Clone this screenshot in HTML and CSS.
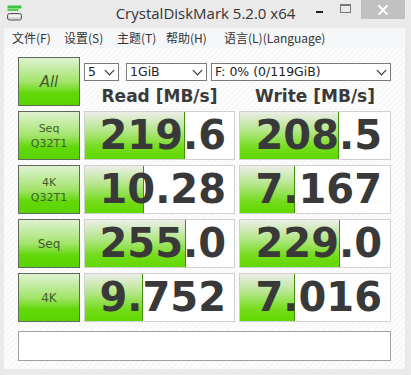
FILE: index.html
```html
<!DOCTYPE html>
<html lang="zh-CN">
<head>
  <meta charset="UTF-8" />
  <title>CrystalDiskMark 5.2.0 x64</title>
  <link rel="stylesheet" href="styles.css">
</head>
<body>

  <div class="window">
    <div class="title-bar">
      <svg class="app-icon" width="16" height="16" viewBox="0 0 16 16">
        <rect x="0.5" y="0.5" width="14" height="3" rx="0.5" fill="#3cc43c" />
        <rect x="0.5" y="4" width="11" height="2" fill="#52d052" />
        <rect x="0.5" y="8.5" width="14" height="6.5" rx="2" fill="#d8d8d8" stroke="#555" stroke-width="1" />
        <rect x="2" y="10" width="11" height="2" fill="#f4f4f4" />
      </svg>
      <div class="title">CrystalDiskMark 5.2.0 x64</div>
      <div class="win-btns">
        <div class="win-btn min"><span></span></div>
        <div class="win-btn max"><span></span></div>
        <div class="win-btn close">
          <svg width="12" height="12" viewBox="0 0 12 12">
            <path d="M1.5 1.5 L10.5 10.5 M10.5 1.5 L1.5 10.5" stroke="#fff" stroke-width="1.8" />
          </svg>
        </div>
      </div>
    </div>

    <div class="menu-bar">
      <span class="menu-item m1">文件(F)</span>
      <span class="menu-item m2">设置(S)</span>
      <span class="menu-item m3">主题(T)</span>
      <span class="menu-item m4">帮助(H)</span>
      <span class="menu-item m5">语言(L)(Language)</span>
    </div>

    <div class="client">
      <div class="grid">
        <div class="test-btn all">All</div>
        <div class="top-panel">
          <div class="selects">
            <div class="select s-count">5<i class="chev"></i></div>
            <div class="select s-size">1GiB<i class="chev"></i></div>
            <div class="select s-drive">F: 0% (0/119GiB)<i class="chev"></i></div>
          </div>
          <div class="headers">
            <div class="head">Read [MB/s]</div>
            <div class="head">Write [MB/s]</div>
          </div>
        </div>

        <div class="test-btn small">Seq<br>Q32T1</div>
        <div class="val" style="--w:100px">219.6</div>
        <div class="val" style="--w:99px">208.5</div>

        <div class="test-btn small">4K<br>Q32T1</div>
        <div class="val" style="--w:59px">10.28</div>
        <div class="val" style="--w:55px">7.167</div>

        <div class="test-btn">Seq</div>
        <div class="val" style="--w:101px">255.0</div>
        <div class="val" style="--w:100px">229.0</div>

        <div class="test-btn">4K</div>
        <div class="val" style="--w:58px">9.752</div>
        <div class="val" style="--w:55px">7.016</div>

        <div class="comment"></div>
      </div>
    </div>
  </div>

</body>
</html>
```

FILE: styles.css
```css
body {
  margin: 0;
  font-family: 'DejaVu Sans', sans-serif;
  background: #e9e9e9;
}

.window {
  width: 411px;
  height: 375px;
  background: #eaeaea;
  display: flex;
  flex-direction: column;
  overflow: hidden;
}

/* title bar */
.title-bar {
  flex-shrink: 0;
  height: 28px;
  position: relative;
  display: flex;
  align-items: flex-start;
}

.app-icon {
  margin: 5px 0 0 7px;
}

.title {
  position: absolute;
  left: 0;
  right: 0;
  top: 3px;
  text-align: center;
  font-family: 'Open Sans', sans-serif;
  font-size: 15px;
  color: #333;
}

.win-btns {
  margin-left: auto;
  margin-right: 6px;
  display: flex;
  position: relative;
}

.win-btn {
  height: 19px;
  display: flex;
  align-items: center;
  justify-content: center;
}

.win-btn.min {
  width: 26px;
}

.win-btn.min span {
  width: 7px;
  height: 2px;
  background: #222;
  margin-top: 5px;
}

.win-btn.max {
  width: 27px;
  margin-right: 2px;
}

.win-btn.max span {
  width: 9px;
  height: 6px;
  border: 1px solid #777;
  border-top-width: 2px;
  margin-top: -2px;
}

.win-btn.close {
  width: 44px;
  background: #c0c0c0;
}

/* menu */
.menu-bar {
  flex-shrink: 0;
  height: 20px;
  margin: 0 6px 0 4px;
  background: #f5f6f7;
  position: relative;
  font-family: 'Noto Sans CJK SC', sans-serif;
  font-size: 12px;
  color: #333;
  line-height: 20px;
}

.menu-item {
  position: absolute;
  top: 0;
}

.m1 { left: 8px; }
.m2 { left: 60px; }
.m3 { left: 113px; }
.m4 { left: 162px; }
.m5 { left: 220px; }

/* client area */
.client {
  flex: 1;
  min-height: 0;
  margin: 0 6px 6px 4px;
  padding: 9px 0 0 14px;
  background: repeating-linear-gradient(135deg, #f7f7f7 0 2px, #fdfdfd 2px 4px);
}

.grid {
  display: grid;
  grid-template-columns: 62px 151px 152px;
  grid-template-rows: repeat(5, 49px) 30px;
  column-gap: 4px;
  row-gap: 5px;
}

.test-btn {
  box-sizing: border-box;
  border: 1px solid #5f6a5c;
  background: linear-gradient(#dff2d2, #a4e46c 50%, #62d80a 75%, #5ad400);
  display: flex;
  align-items: center;
  justify-content: center;
  text-align: center;
  color: #3f5f2c;
  font-family: 'DejaVu Sans', sans-serif;
  font-size: 12px;
  line-height: 16px;
}

.test-btn.all {
  font-size: 15px;
  font-style: italic;
}

.test-btn.small {
  font-size: 11px;
  line-height: 15px;
}

.top-panel {
  grid-column: 2 / 4;
  display: flex;
  flex-direction: column;
}

.selects {
  display: flex;
  margin-top: 6px;
  height: 18px;
}

.select {
  box-sizing: border-box;
  height: 18px;
  background: #fff;
  border: 1px solid #7a7a7a;
  font-size: 12.5px;
  line-height: 16px;
  padding-left: 3px;
  color: #222;
  display: flex;
  align-items: center;
}

.s-count { width: 35px; }
.s-size { width: 81px; margin-left: 7px; }
.s-drive { width: 180px; margin-left: 4px; }

.chev {
  margin-left: auto;
  margin-right: 5px;
  width: 6px;
  height: 6px;
  border-right: 1.6px solid #222;
  border-bottom: 1.6px solid #222;
  transform: rotate(45deg);
  margin-top: -4px;
}

.headers {
  display: grid;
  grid-template-columns: 151px 152px;
  column-gap: 4px;
  margin-top: 4px;
}

.head {
  text-align: center;
  font-weight: bold;
  font-size: 17px;
  line-height: 22px;
  color: #3a3a3a;
}

.val {
  box-sizing: border-box;
  border: 1px solid #d0d0d0;
  background-color: #fff;
  background-image:
    linear-gradient(to right, transparent calc(100% - 1px), #3f8f0a calc(100% - 1px)),
    linear-gradient(#eceee9, #b4e688 40%, #74dc1c 75%, #62d800);
  background-size: var(--w) 100%;
  background-repeat: no-repeat;
  text-align: right;
  padding-right: 8px;
  font-weight: bold;
  font-size: 40px;
  line-height: 47px;
  color: #393939;
}

.comment {
  grid-column: 1 / 4;
  margin-top: 4px;
  height: 30px;
  box-sizing: border-box;
  background: #fff;
  border: 1px solid #a0a0a0;
}
```
